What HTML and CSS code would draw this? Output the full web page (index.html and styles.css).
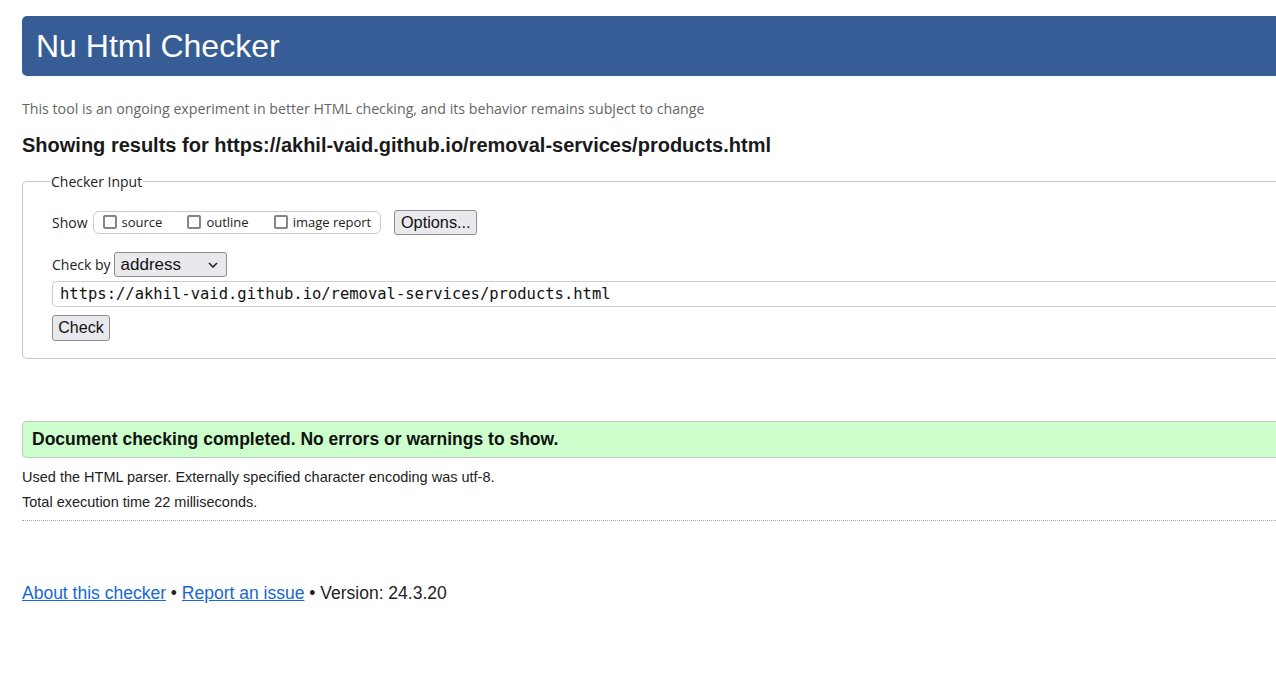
FILE: index.html
```html
<!DOCTYPE html>
<html>
<head>
<meta charset="utf-8">
<title>Nu Html Checker</title>
<link rel="stylesheet" href="styles.css">
</head>
<body>
<div class="page">
  <h1 class="banner">Nu Html Checker</h1>
  <p class="tagline">This tool is an ongoing experiment in better HTML checking, and its behavior remains subject to change</p>
  <h2 class="results-title">Showing results for https://akhil-vaid.github.io/removal-services/products.html</h2>
  <fieldset class="checker">
    <legend class="checker-legend">Checker Input</legend>
    <div class="show-row">
      <span class="label">Show</span>
      <span class="show-group">
        <label class="opt"><span class="box"></span>source</label>
        <label class="opt"><span class="box"></span>outline</label>
        <label class="opt"><span class="box"></span>image report</label>
      </span>
      <span class="btn btn-options">Options...</span>
    </div>
    <div class="by-row">
      <span class="label">Check by</span>
      <span class="select">address<svg class="chev" width="10" height="6" viewBox="0 0 10 6"><path d="M1 1l4 4 4-4" fill="none" stroke="#222" stroke-width="1.6"/></svg></span>
    </div>
    <div class="url-input">https://akhil-vaid.github.io/removal-services/products.html</div>
    <div class="check-row"><span class="btn btn-check">Check</span></div>
  </fieldset>
  <div class="success">Document checking completed. No errors or warnings to show.</div>
  <p class="details">Used the HTML parser. Externally specified character encoding was utf-8.</p>
  <p class="details">Total execution time 22 milliseconds.</p>
  <div class="rule"></div>
  <p class="footer"><a href="#">About this checker</a> • <a href="#">Report an issue</a> • Version: 24.3.20</p>
</div>
</body>
</html>
```
FILE: styles.css
```css
html, body {
  margin: 0;
  padding: 0;
  overflow: hidden;
  background: #fff;
}
body {
  font-family: "Liberation Sans", Arial, sans-serif;
  color: #111;
}
.page {
  width: 1300px;
  padding: 16px 0 0 22px;
}
.banner {
  margin: 0;
  height: 60px;
  line-height: 60px;
  padding-left: 14px;
  background: #365d95;
  color: #fff;
  font-weight: normal;
  font-size: 32px;
  border-radius: 5px 0 0 5px;
}
.tagline {
  margin: 25px 0 0;
  font-family: "Open Sans", sans-serif;
  font-size: 14.2px;
  line-height: 16px;
  color: #666;
}
.results-title {
  margin: 16px 0 0;
  font-size: 20px;
  line-height: 24px;
  font-weight: bold;
  color: #1a1a1a;
}
.checker {
  margin: 15px 0 0;
  padding: 18px 0 17px 29px;
  border: 1px solid #c8c8c8;
  border-right: none;
  border-radius: 5px 0 0 5px;
  min-inline-size: 0;
}
.checker-legend {
  font-family: "Open Sans", sans-serif;
  font-size: 14px;
  color: #222;
  padding: 0 1px;
  margin-left: -2px;
}
.label {
  font-family: "Open Sans", sans-serif;
  font-size: 14px;
  color: #222;
}
.show-row {
  display: flex;
  align-items: center;
  height: 26px;
}
.show-group {
  display: inline-flex;
  align-items: center;
  margin-left: 5px;
  height: 23px;
  box-sizing: border-box;
  padding: 0 9px 0 9px;
  border: 1px solid #ccc;
  border-radius: 6px;
  gap: 25px;
}
.opt {
  display: inline-flex;
  align-items: center;
  font-family: "Open Sans", sans-serif;
  font-size: 13px;
  color: #222;
  gap: 5px;
}
.box {
  width: 14px;
  height: 14px;
  border: 2px solid #858585;
  border-radius: 2px;
  box-sizing: border-box;
  background: #fff;
}
.btn {
  display: inline-flex;
  align-items: center;
  justify-content: center;
  box-sizing: border-box;
  border: 1px solid #8f8f8f;
  border-radius: 3px;
  background: #e9e9ed;
  font-family: "Liberation Sans", Arial, sans-serif;
  color: #111;
}
.btn-options {
  margin-left: 13px;
  width: 83px;
  height: 25px;
  font-size: 16.3px;
}
.by-row {
  display: flex;
  align-items: center;
  margin-top: 17px;
  height: 25px;
}
.select {
  display: inline-flex;
  align-items: center;
  justify-content: space-between;
  box-sizing: border-box;
  margin-left: 3px;
  width: 113px;
  height: 25px;
  padding: 0 8px 0 6px;
  border: 1px solid #8f8f8f;
  border-radius: 3px;
  background: #e9e9ed;
  font-size: 17px;
  color: #111;
}
.url-input {
  margin-top: 4px;
  box-sizing: border-box;
  height: 26px;
  line-height: 24px;
  padding-left: 7px;
  border: 1px solid #ccc;
  border-right: none;
  border-radius: 5px 0 0 5px;
  font-family: "DejaVu Sans Mono", monospace;
  font-size: 15.5px;
  color: #111;
}
.check-row {
  margin-top: 8px;
  display: flex;
}
.btn-check {
  width: 58px;
  height: 26px;
  font-size: 16px;
}
.success {
  margin-top: 62px;
  box-sizing: border-box;
  height: 37px;
  line-height: 35px;
  padding-left: 9px;
  background: #ccffcc;
  border: 1px solid #c4c4c4;
  border-right: none;
  border-radius: 5px 0 0 5px;
  font-size: 17.5px;
  font-weight: bold;
  color: #111;
}
.details {
  margin: 0;
  font-size: 14.5px;
  line-height: 25px;
  color: #222;
}
.success + .details {
  margin-top: 7px;
}
.rule {
  margin-top: 5px;
  border-top: 1px dotted #aaa;
}
.footer {
  margin: 62px 0 0;
  font-size: 17.5px;
  color: #222;
}
.footer a {
  color: #1568d6;
  text-decoration: underline;
}
```
